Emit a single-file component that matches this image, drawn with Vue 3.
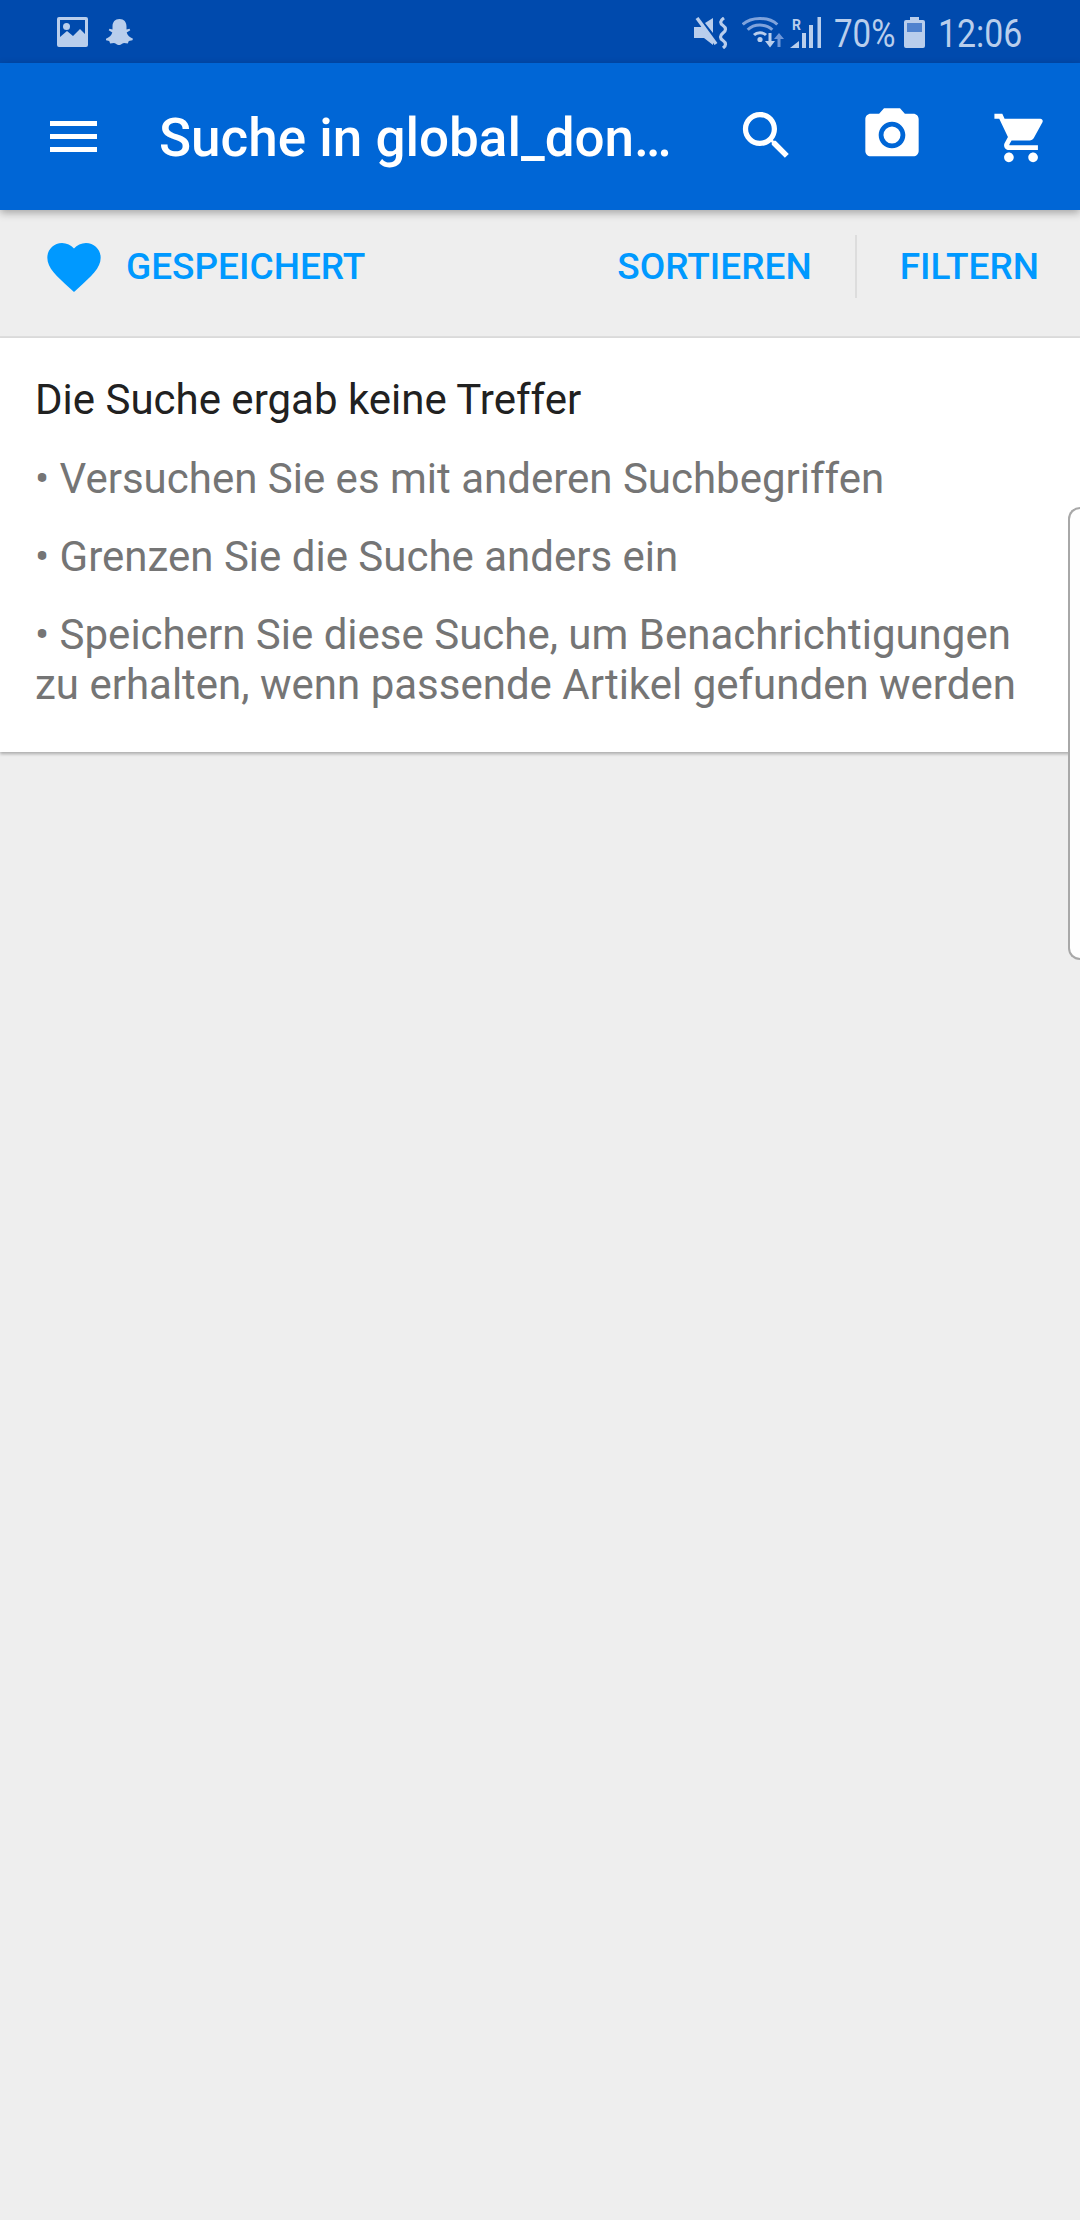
<template>
  <div class="screen">
    <!-- Android status bar -->
    <div class="status">
      <svg class="st-photo" viewBox="0 0 31 30">
        <path fill="#b9ceec" fill-rule="evenodd" d="M2 0h27a2 2 0 0 1 2 2v26a2 2 0 0 1-2 2H2a2 2 0 0 1-2-2V2a2 2 0 0 1 2-2zm1 3v17l7-6 6 5 7-7 5 5V3z" />
        <circle cx="9.500" cy="9.500" r="3.500" fill="#b9ceec" />
      </svg>
      <svg class="st-ghost" viewBox="0 0 27 26">
        <path fill="#b9ceec" d="M13.500 0c4.600 0 7 3.200 7 7.400v3l3-.6.800 1.500-3.600 2.200c.8 3 3 4.800 6.300 6.200l-.6 1.500-3.600.9-1 2.300-3.600-.3c-1.800 0-3 2-5.200 2s-3.400-2-5.200-2l-3.600.3-1-2.300-3.600-.9L0 19.700c3.300-1.400 5.500-3.200 6.300-6.200L2.700 11.300l.8-1.500 3 .6v-3C6.500 3.200 8.900 0 13.500 0z" />
      </svg>

      <div class="status-right">
        <svg class="st-mute" viewBox="0 0 34 32">
          <path fill="#b9ceec" d="M0 10h7l1-1 11 13v6l-9-7H0zM11 6l8-5v15z" />
          <path stroke="#b9ceec" stroke-width="3.500" d="M3 1l19 26" />
          <path fill="none" stroke="#b9ceec" stroke-width="3.200" d="M30 1q-6 4-1 7.500q5 3.500 0 7.500q-5 4 0 7.500q5 3.500 0 7.500" />
        </svg>
        <svg class="st-wifi" viewBox="0 0 44 31">
          <g fill="none" stroke-width="3">
            <path stroke="#7fa3dc" d="M.7 7.500C9 -.5 27 -.5 35.300 7.500" />
            <path stroke="#7fa3dc" d="M5.700 12.800C12 6.500 24 6.500 30.300 12.800" />
            <path stroke="#b9ceec" d="M12 18C15 15 21 15 24 18" />
          </g>
          <circle cx="18" cy="22.500" r="2.600" fill="#b9ceec" />
          <path fill="#b9ceec" d="M26.500 16h3v8h3.500l-5 6.500-5-6.500h3.500z" />
          <path fill="#6f97d8" d="M37 16l5 6h-3.500v8h-3v-8H32z" />
        </svg>
        <div class="st-signal">
          <span class="st-roam">R</span>
          <svg viewBox="0 0 31 31">
            <path fill="#b9ceec" d="M0 31l9-7v7z" />
            <path fill="#b9ceec" d="M12 16h4v15h-4zM19 8h4v23h-4zM27.500 0H31v31h-3.500z" />
          </svg>
        </div>
        <span class="st-text st-pct">70%</span>
        <svg class="st-batt" viewBox="0 0 21 31">
          <path fill="#b9ceec" d="M6 0h9v3h4a2 2 0 0 1 2 2v24a2 2 0 0 1-2 2H2a2 2 0 0 1-2-2V5a2 2 0 0 1 2-2h4z" />
          <rect x="3" y="6" width="15" height="9" fill="#4f82ce" />
        </svg>
        <span class="st-text st-clock">12:06</span>
      </div>
    </div>

    <!-- App toolbar -->
    <header class="toolbar">
      <svg class="tb-menu" viewBox="0 0 47 31">
        <path fill="#fff" d="M0 0h47v5H0zM0 13h47v5H0zM0 26h47v5H0z" />
      </svg>
      <h1 class="tb-title">Suche in global_don…</h1>
      <svg class="tb-icon tb-search" viewBox="0 0 24 24">
        <path fill="#fff" d="M15.500 14h-.79l-.28-.27C15.410 12.590 16 11.110 16 9.500 16 5.910 13.090 3 9.500 3S3 5.910 3 9.500 5.910 16 9.500 16c1.610 0 3.090-.59 4.230-1.570l.27.28v.79l5 4.990L20.490 19l-4.990-5zm-6 0C7.010 14 5 11.990 5 9.500S7.010 5 9.500 5 14 7.010 14 9.500 11.990 14 9.500 14z" />
      </svg>
      <svg class="tb-icon tb-camera" viewBox="0 0 24 24">
        <circle cx="12" cy="12" r="3.200" fill="#fff" />
        <path fill="#fff" d="M9 2L7.170 4H4c-1.100 0-2 .9-2 2v12c0 1.100.9 2 2 2h16c1.100 0 2-.9 2-2V6c0-1.100-.9-2-2-2h-3.170L15 2H9zm3 15c-2.760 0-5-2.240-5-5s2.240-5 5-5 5 2.240 5 5-2.240 5-5 5z" />
      </svg>
      <svg class="tb-icon tb-cart" viewBox="0 0 24 24">
        <path fill="#fff" d="M7 18c-1.100 0-1.990.9-1.990 2S5.900 22 7 22s2-.9 2-2-.9-2-2-2zM1 2v2h2l3.600 7.590-1.350 2.450c-.16.280-.25.610-.25.960 0 1.100.9 2 2 2h12v-2H7.420c-.14 0-.25-.11-.25-.25l.03-.12.9-1.630h7.450c.750 0 1.410-.41 1.750-1.030l3.580-6.490c.080-.14.120-.31.120-.48 0-.55-.45-1-1-1H5.210l-.94-2H1zm16 16c-1.100 0-1.990.9-1.990 2s.89 2 1.990 2 2-.9 2-2-.9-2-2-2z" />
      </svg>
    </header>

    <!-- Saved / sort / filter row -->
    <div class="actions">
      <svg class="heart" viewBox="0 0 24 24">
        <path fill="#0099ff" d="M12 21.350l-1.450-1.320C5.400 15.360 2 12.280 2 8.500 2 5.420 4.420 3 7.500 3c1.740 0 3.410.81 4.500 2.090C13.090 3.810 14.760 3 16.500 3 19.580 3 22 5.420 22 8.500c0 3.780-3.400 6.860-8.550 11.540L12 21.350z" />
      </svg>
      <span class="action saved">GESPEICHERT</span>
      <span class="action sort">SORTIEREN</span>
      <span class="divider"></span>
      <span class="action filter">FILTERN</span>
    </div>

    <!-- Empty result card -->
    <section class="card">
      <h2 class="card-title">Die Suche ergab keine Treffer</h2>
      <p v-for="tip in tips" :key="tip" class="tip">{{ tip }}</p>
    </section>

    <!-- Edge panel handle -->
    <div class="edge"></div>
  </div>
</template>

<script setup>
const tips = [
  '• Versuchen Sie es mit anderen Suchbegriffen',
  '• Grenzen Sie die Suche anders ein',
  '• Speichern Sie diese Suche, um Benachrichtigungen zu erhalten, wenn passende Artikel gefunden werden'
]
</script>

<style>
html, body { margin: 0; background: #eeeeee; }
</style>

<style scoped>
.screen {
  position: relative;
  width: 1080px;
  height: 2220px;
  overflow: hidden;
  background: #eeeeee;
  font-family: Roboto, "Liberation Sans", sans-serif;
}

/* status bar */
.status {
  display: flex;
  align-items: flex-start;
  height: 63px;
  background: #004aad;
  box-sizing: border-box;
  padding: 17px 0 0 57px;
}
.st-photo { width: 31px; height: 30px; }
.st-ghost { width: 27px; height: 26px; margin: 2px 0 0 18px; }
.status-right { display: flex; align-items: flex-start; margin-left: auto; padding-right: 58px; }
.st-mute { width: 34px; height: 32px; }
.st-wifi { width: 44px; height: 31px; margin-left: 14px; }
.st-signal { position: relative; width: 31px; height: 31px; margin-left: 4px; }
.st-signal svg { display: block; width: 31px; height: 31px; }
.st-roam {
  position: absolute;
  left: 2px;
  top: 0;
  font-size: 14px;
  line-height: 16px;
  font-weight: 700;
  color: #b9ceec;
}
.st-text {
  display: inline-block;
  font-size: 38px;
  line-height: 35px;
  color: #b9ceec;
  white-space: nowrap;
  transform: scaleX(.87);
  transform-origin: left center;
}
.st-pct { width: 61px; margin-left: 13px; }
.st-batt { width: 21px; height: 31px; margin-left: 9px; }
.st-clock { width: 84px; margin-left: 13px; transform: scaleX(.89); }

/* toolbar */
.toolbar {
  position: relative;
  display: flex;
  align-items: center;
  height: 147px;
  padding-right: 30px;
  background: #0066d6;
  box-shadow: 0 3px 8px rgba(0, 0, 0, .3);
}
.tb-menu { width: 47px; height: 31px; margin: 0 0 0 50px; flex: none; }
.tb-title {
  flex: 1;
  min-width: 0;
  margin: 3px 0 0 62px;
  font-size: 53px;
  font-weight: 500;
  color: #fff;
  white-space: nowrap;
}
.tb-icon { flex: none; }
.tb-search { width: 63px; height: 63px; margin-top: -2px; }
.tb-camera { width: 64px; height: 64px; margin: -3px 0 0 62px; }
.tb-cart { width: 58px; height: 58px; margin: 3px 0 0 68px; }

/* action row */
.actions {
  display: flex;
  align-items: center;
  height: 128px;
  box-sizing: border-box;
  padding-bottom: 13px;
  border-bottom: 2px solid #dddddd;
}
.heart { width: 64px; height: 64px; margin-left: 42px; flex: none; }
.action {
  font-size: 37px;
  font-weight: 500;
  color: #0099ff;
  white-space: nowrap;
}
.saved { margin-left: 20px; }
.sort { margin-left: auto; }
.divider { width: 2px; height: 63px; margin: 0 43px; background: #dddddd; }
.filter { margin-right: 41px; }

/* result card */
.card {
  background: #fff;
  height: 414px;
  box-sizing: border-box;
  padding: 36px 35px 0;
  box-shadow: 0 2px 3px rgba(0, 0, 0, .28);
}
.card-title {
  margin: 0 0 3px;
  font-size: 42px;
  line-height: 52px;
  font-weight: 400;
  color: #212121;
}
.tip {
  margin: 28px 0 0;
  font-size: 42px;
  line-height: 50px;
  color: #757575;
}

/* edge panel */
.edge {
  position: absolute;
  right: 0;
  top: 507px;
  width: 12px;
  height: 453px;
  box-sizing: border-box;
  background: #fefefe;
  border: 2px solid #a8a8a8;
  border-right: 0;
  border-radius: 16px 0 0 16px;
}
</style>
